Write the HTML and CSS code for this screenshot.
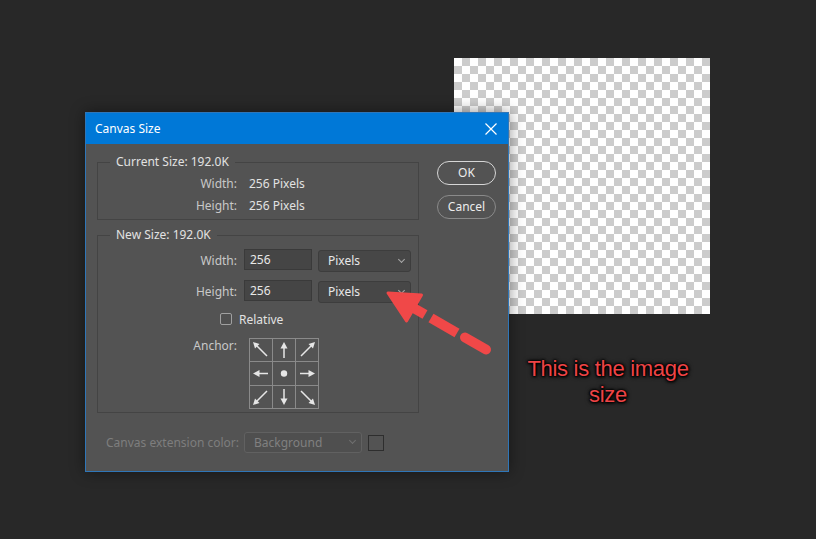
FILE: index.html
```html
<!DOCTYPE html>
<html>
<head>
<meta charset="utf-8">
<link rel="stylesheet" href="styles.css">
</head>
<body>
<div class="desk">
  <div class="image"></div>

  <div class="dialog">
    <div class="titlebar">
      <span class="title">Canvas Size</span>
      <svg class="close" width="12" height="12" viewBox="0 0 12 12"><path d="M0.5 0.5 L11.5 11.5 M11.5 0.5 L0.5 11.5" stroke="#fff" stroke-width="1.2" fill="none"/></svg>
    </div>
    <div class="content">
      <div class="left">
        <div class="group g1">
          <span class="legend">Current Size: 192.0K</span>
          <div class="rows">
            <span class="lbl">Width:</span><span class="val">256 Pixels</span>
            <span class="lbl">Height:</span><span class="val">256 Pixels</span>
          </div>
        </div>
        <div class="group g2">
          <span class="legend">New Size: 192.0K</span>
          <div class="field">
            <span class="lbl">Width:</span>
            <div class="input">256</div>
            <div class="select">Pixels<span class="chev"></span></div>
          </div>
          <div class="field">
            <span class="lbl">Height:</span>
            <div class="input">256</div>
            <div class="select">Pixels<span class="chev"></span></div>
          </div>
          <div class="relative"><span class="check"></span><span class="val">Relative</span></div>
          <div class="anchor-row">
            <span class="lbl">Anchor:</span>
            <svg class="anchor" width="70" height="71" viewBox="0 0 70 71">
              <g stroke="#8a8a8a" stroke-width="1" fill="none">
                <rect x="0.5" y="0.5" width="69" height="70"/>
                <path d="M23.5 0 V71 M46.5 0 V71 M0 23.5 H70 M0 47.5 H70"/>
              </g>
              <g stroke="#e6e6e6" stroke-width="1.5" fill="none">
                <path d="M18 18 L8 8 M35 20 V9 M52 18 L62 8 M19 35.5 H9 M51 35.5 H61 M18 53 L8 63 M35 51 V62 M52 53 L62 63"/>
              </g>
              <g fill="#e6e6e6">
                <polygon points="4,4 10.5,6 6,10.5"/>
                <polygon points="35,4 31.5,10.5 38.5,10.5"/>
                <polygon points="66,4 59.5,6 64,10.5"/>
                <polygon points="4,35.5 10.5,32 10.5,39"/>
                <polygon points="66,35.5 59.5,32 59.5,39"/>
                <polygon points="4,67 6,60.5 10.5,65"/>
                <polygon points="35,67 31.5,60.5 38.5,60.5"/>
                <polygon points="66,67 64,60.5 59.5,65"/>
                <circle cx="35" cy="35.5" r="3.2"/>
              </g>
            </svg>
          </div>
        </div>
      </div>
      <div class="buttons">
        <div class="btn default">OK</div>
        <div class="btn">Cancel</div>
      </div>
    </div>
    <div class="footer">
      <span class="flbl">Canvas extension color:</span>
      <div class="select disabled">Background<span class="chev"></span></div>
      <span class="swatch"></span>
    </div>
  </div>

  <svg class="pointer" width="120" height="80" viewBox="0 0 120 80">
    <g stroke="#f04848" stroke-width="10" fill="none">
      <path d="M30 26 L45 34.5"/>
      <path d="M51 38 L77 53"/>
      <path d="M85 57.5 L106 69.5" stroke-linecap="round"/>
    </g>
    <polygon points="8,13 41.5,15 26.5,41" fill="#f04848" stroke="#f04848" stroke-width="3" stroke-linejoin="round"/>
  </svg>

  <div class="note">This is the image<br>size</div>
</div>
</body>
</html>
```
FILE: styles.css
```css
html, body {
  margin: 0;
  padding: 0;
}
body {
  background: #282828;
  font-family: "Noto Sans", "Open Sans", sans-serif;
  font-size: 12px;
}
.desk {
  position: relative;
  width: 816px;
  height: 539px;
  overflow: hidden;
  background: #282828;
}
.image {
  position: absolute;
  left: 454px;
  top: 58px;
  width: 256px;
  height: 256px;
  background-color: #fff;
  background-image: conic-gradient(#cccccc 25%, #ffffff 0 50%, #cccccc 0 75%, #ffffff 0);
  background-size: 16px 16px;
}
.dialog {
  position: absolute;
  left: 85px;
  top: 112px;
  width: 424px;
  height: 360px;
  box-sizing: border-box;
  border: 1px solid #2f76b8;
  background: #535353;
  box-shadow: 0 0 14px rgba(0, 0, 0, 0.45);
  display: flex;
  flex-direction: column;
}
.titlebar {
  height: 31px;
  background: #0078d7;
  display: flex;
  align-items: center;
  justify-content: space-between;
  padding: 0 10px 0 9px;
  color: #fff;
}
.title {
  font-size: 12px;
  line-height: 1;
}
.close {
  display: block;
  margin-right: 1px;
}
.content {
  display: grid;
  grid-template-columns: 322px 59px;
  column-gap: 18px;
  padding: 18px 0 0 11px;
}
.group {
  position: relative;
  box-sizing: border-box;
  border: 1px solid #444444;
}
.legend {
  position: absolute;
  top: -9px;
  left: 12px;
  padding: 0 6px;
  background: #535353;
  color: #e2e2e2;
  line-height: 16px;
}
.g1 {
  height: 58px;
  padding-top: 10px;
}
.rows {
  display: grid;
  grid-template-columns: 139px auto;
  column-gap: 12px;
  line-height: 22px;
}
.lbl {
  color: #c8c8c8;
  text-align: right;
}
.val {
  color: #e2e2e2;
}
.g2 {
  margin-top: 15px;
  height: 178px;
  padding-top: 13px;
}
.field {
  display: grid;
  grid-template-columns: 139px 68px 92px;
  column-gap: 7px;
  align-items: center;
  height: 22px;
  margin-bottom: 9px;
}
.input {
  box-sizing: border-box;
  height: 21px;
  background: #454545;
  border: 1px solid #3a3a3a;
  color: #e8e8e8;
  padding-left: 5px;
  line-height: 19px;
  align-self: start;
}
.select {
  position: relative;
  box-sizing: border-box;
  height: 22px;
  border: 1px solid #3d3d3d;
  border-radius: 3px;
  background: #474747;
  color: #e8e8e8;
  padding-left: 9px;
  line-height: 20px;
  margin-left: -1px;
  margin-top: 1px;
}
.chev {
  position: absolute;
  right: 6px;
  top: 6px;
  width: 4px;
  height: 4px;
  border-right: 1px solid #a8a8a8;
  border-bottom: 1px solid #a8a8a8;
  transform: rotate(45deg);
}
.relative {
  display: flex;
  align-items: center;
  height: 16px;
  margin-left: 122px;
  margin-top: 1px;
}
.check {
  box-sizing: border-box;
  width: 12px;
  height: 12px;
  border: 1px solid #a0a0a0;
  border-radius: 2px;
  background: #505050;
  margin-right: 7px;
}
.anchor-row {
  display: grid;
  grid-template-columns: 139px 70px;
  column-gap: 12px;
  margin-top: 11px;
}
.anchor-row .lbl {
  line-height: 16px;
}
.anchor {
  display: block;
}
.buttons {
  display: flex;
  flex-direction: column;
  gap: 10px;
  margin-top: -1px;
}
.btn {
  box-sizing: border-box;
  height: 24px;
  border: 1px solid #8a8a8a;
  border-radius: 12px;
  color: #ececec;
  text-align: center;
  line-height: 22px;
}
.btn.default {
  border-color: #d6d6d6;
}
.footer {
  display: flex;
  align-items: center;
  padding-left: 20px;
  margin-top: 19px;
  height: 21px;
}
.flbl {
  width: 138px;
  white-space: nowrap;
  color: #7e7e7e;
}
.select.disabled {
  width: 118px;
  height: 21px;
  margin: 0;
  background: #4f4f4f;
  border-color: #616161;
  color: #808080;
  line-height: 19px;
}
.select.disabled .chev {
  border-color: #707070;
  top: 5px;
}
.swatch {
  box-sizing: border-box;
  width: 16px;
  height: 16px;
  margin-left: 6px;
  border: 1px solid #2e2e2e;
}
.pointer {
  position: absolute;
  left: 380px;
  top: 280px;
  display: block;
}
.note {
  position: absolute;
  left: 500px;
  top: 356px;
  width: 216px;
  text-align: center;
  font-family: "Liberation Sans", Arial, sans-serif;
  font-size: 22px;
  letter-spacing: -0.3px;
  line-height: 26px;
  color: #ee4446;
  text-shadow: 0 0 1px #000, 0 0 2px #000, 0 0 3px #000, 1px 1px 3px #000, 0 0 5px #000;
}
```
